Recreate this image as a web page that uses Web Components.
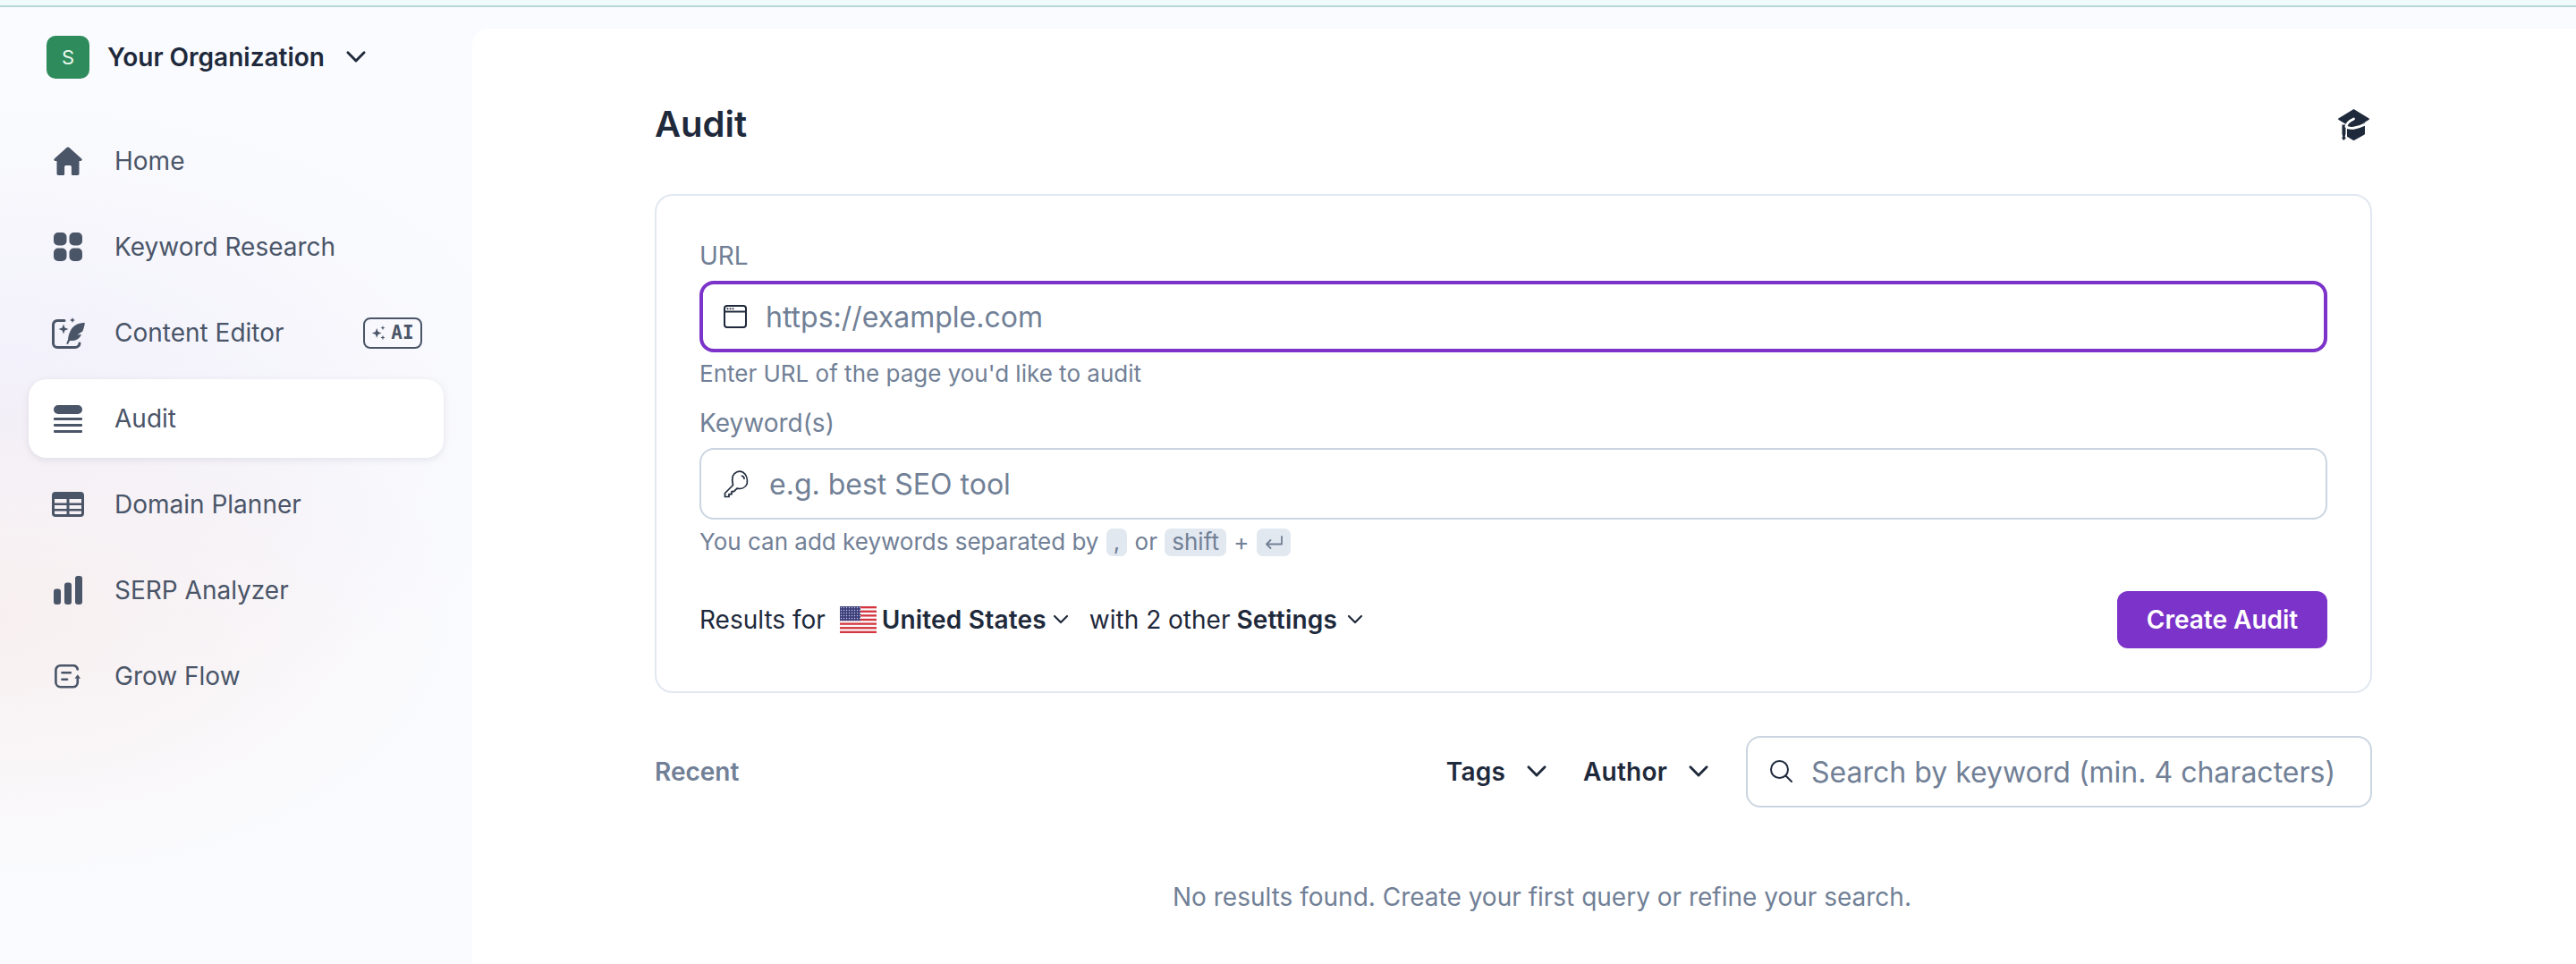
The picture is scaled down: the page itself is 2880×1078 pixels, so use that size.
<!DOCTYPE html>
<html lang="en"><head><meta charset="utf-8"><title>Audit</title>
<style>
html,body{margin:0;padding:0;height:100%;overflow:hidden}
body{font-family:Inter,"Liberation Sans",sans-serif;color:#1e293b}
</style></head><body>
<app-shell>
  <side-bar slot="side">
    <org-switch>Your Organization</org-switch>
    <nav-item icon="home">Home</nav-item>
    <nav-item icon="grid">Keyword Research</nav-item>
    <nav-item icon="quill" badge>Content Editor</nav-item>
    <nav-item icon="audit" active>Audit</nav-item>
    <nav-item icon="table">Domain Planner</nav-item>
    <nav-item icon="bars">SERP Analyzer</nav-item>
    <nav-item icon="flow">Grow Flow</nav-item>
  </side-bar>
  <audit-page slot="main"></audit-page>
</app-shell>
<script>
const ICONS={
home:'<path fill="currentColor" d="M16 .5c.5 0 1 .2 1.400.6l13.800 12.400c1 .9.4 2.500-.9 2.500H28.500v14.300c0 1-.8 1.700-1.700 1.700h-5.300c-.9 0-1.600-.7-1.600-1.600v-7.700c0-1-.8-1.700-1.700-1.700h-4.400c-.9 0-1.700.7-1.700 1.700v7.700c0 .9-.7 1.600-1.600 1.600H5.200c-.9 0-1.700-.7-1.700-1.700V16H1.700c-1.300 0-1.900-1.600-.9-2.500L14.600 1.100c.4-.4.9-.6 1.400-.6z"/>',
grid:'<g fill="currentColor"><rect x="0" y="0" width="14.500" height="14.500" rx="5"/><rect x="17.500" y="0" width="14.500" height="14.500" rx="5"/><rect x="0" y="17.500" width="14.500" height="14.500" rx="5"/><rect x="17.500" y="17.500" width="14.500" height="14.500" rx="5"/></g>',
quill:'<path fill="none" stroke="currentColor" stroke-width="3" stroke-linecap="round" stroke-linejoin="round" d="M14 3.500H6A4.500 4.500 0 0 0 1.500 8V29A4.500 4.500 0 0 0 6 33.500H26a5 5 0 0 0 5-4.500"/><g fill="currentColor"><path d="M13 7.500l1.500 4 4 1.500-4 1.500-1.500 4-1.500-4-4-1.500 4-1.500z"/><path d="M23 0l.9 2.100 2.100.9-2.100.9-.9 2.100-.9-2.100-2.100-.9 2.100-.9z"/><path d="M37 6c-7 0-12.500 2.400-15.500 7.500-2.200 3.800-3.300 8-3.500 11.500-.7 1.500-1.400 3-1.800 4.200l1.800.8c.6-1.400 1.300-2.800 2-4 5.500.5 10.700-1.500 13-7l-4.500.5 5.800-3.900c1.300-3 2.200-6.600 2.700-10.600z"/></g>',
audit:'<g fill="currentColor"><rect x="0" y="0" width="32" height="10" rx="5"/><rect x="0" y="14" width="32" height="3" rx="1"/><rect x="0" y="21" width="32" height="3" rx="1"/><rect x="0" y="28" width="32" height="3" rx="1"/></g>',
table:'<path fill="currentColor" fill-rule="evenodd" d="M4 0h28a4 4 0 0 1 4 4v20a4 4 0 0 1-4 4H4a4 4 0 0 1-4-4V4a4 4 0 0 1 4-4zM3 8v4.500h13.500V8zM19.500 8v4.500H33V8zM3 15v4h13.500v-4zM19.500 15v4H33v-4zM3 21.500V24a1 1 0 0 0 1 1h12.500v-3.500zM19.500 21.500V25H32a1 1 0 0 0 1-1v-2.500z"/>',
bars:'<g fill="currentColor"><rect x="0" y="14.500" width="8" height="17.500" rx="3"/><rect x="12" y="7.500" width="8" height="24.500" rx="3"/><rect x="24" y="0" width="8" height="32" rx="3"/></g>',
flow:'<g fill="none" stroke="currentColor" stroke-width="2.800" stroke-linecap="round" stroke-linejoin="round"><path d="M27.500 6A5.500 5.500 0 0 0 23 1.500H7A5.500 5.500 0 0 0 1.500 7V21.500A5.500 5.500 0 0 0 7 27H22.500a5.500 5.500 0 0 0 5-5.500v-4"/><path d="M9 10h10M9 18h6"/></g><path fill="currentColor" d="M27.500 12l3.500 5h-7z"/>',
chev:'<path fill="none" stroke="currentColor" stroke-width="2.200" stroke-linecap="round" stroke-linejoin="round" d="M3 6l7 7 7-7"/>',
browser:'<g fill="none" stroke="currentColor" stroke-width="2"><rect x="2" y="2" width="24" height="24" rx="3"/><path d="M2 8.500h24"/></g><g fill="currentColor"><circle cx="5.500" cy="5.300" r="1"/><circle cx="8.500" cy="5.300" r="1"/><circle cx="11.500" cy="5.300" r="1"/></g>',
key:'<g fill="none" stroke="currentColor" stroke-width="1.700" stroke-linecap="round" stroke-linejoin="round"><path d="M11.500 17.500 2.500 26.500v4h4.500v-2.800h3v-3h2.500l3.500-3.500c5 1 9.500-1 11.200-5.200C28 11 26.500 5.500 22.500 3 18 .7 13 3 11.200 7.500c-.8 2.800-.7 6 .3 10z"/><path d="M21.500 7.200c1.500.4 2.500 1.600 2.500 3"/></g>',
search:'<g fill="none" stroke="currentColor" stroke-width="2" stroke-linecap="round"><circle cx="11.500" cy="11.500" r="9.500"/><path d="M18.500 18.500 25 25"/></g>',
cap:'<g fill="currentColor"><path d="M17.500 0 34.300 10.200c.9.500.9 1.300 0 1.800L17.500 22.300.7 12c-.9-.5-.9-1.300 0-1.800z"/><path d="M10 17.500l7.500 4.600L30 15v12c0 1-.5 1.600-1.300 2.100L18.300 34.700c-.5.300-1.100.3-1.600 0L10 30.700z"/><path d="M4.500 17.500h4v10l-.8 3.300 1 2-2.700 2.200-1.800-2.800 1-1.500-.7-3z"/></g><path fill="none" stroke="#fff" stroke-width="2.800" stroke-linecap="round" d="M17.500 11C13 13 9.500 16 9 19.500c3 3.500 12 2 21.500-2.500"/>',
enter:'<path fill="none" stroke="currentColor" stroke-width="1.800" stroke-linecap="round" stroke-linejoin="round" d="M20 2v8.500H3M7.500 6 3 10.500 7.500 15"/>',
spark:'<g fill="currentColor"><path d="M7 4.500l1.600 4.400L13 10.500l-4.400 1.600L7 16.500l-1.600-4.400L1 10.500l4.400-1.600z"/><path d="M14.500 1l.8 2.200 2.200.8-2.200.8-.8 2.200-.8-2.200-2.200-.8 2.200-.8z"/><path d="M14.500 13.200l.8 2.200 2.200.8-2.200.8-.8 2.200-.8-2.200-2.200-.8 2.200-.8z"/></g>'
};
const VB={home:'0 0 32 33',grid:'0 0 32 32',quill:'0 0 37 35',audit:'0 0 32 31',table:'0 0 36 28',bars:'0 0 32 32',flow:'0 0 32 28',chev:'0 0 20 20',browser:'0 0 28 28',key:'0 0 32 32',search:'0 0 28 28',cap:'0 0 35 35',enter:'0 0 22 16',spark:'0 0 19 20'};
function icon(n,w,h,style=''){return `<svg xmlns="http://www.w3.org/2000/svg" width="${w}" height="${h||w}" viewBox="${VB[n]}" style="display:block;flex:none;${style}" aria-hidden="true">${ICONS[n]}</svg>`}
class Base extends HTMLElement{
  constructor(){super();this.attachShadow({mode:'open'});}
  connectedCallback(){this.shadowRoot.innerHTML=this.render();}
}
customElements.define('app-shell',class extends Base{render(){return `<style>
:host{display:flex;flex-direction:column;height:1078px;width:2880px;overflow:hidden;
background:
 radial-gradient(520px 300px at 0 690px,#f8f0f0 0,rgba(248,240,240,0) 100%),
 radial-gradient(620px 360px at 0 470px,#f1effa 0,rgba(241,239,250,0) 100%),
 #fafbfe}
.top{height:6px;background:#effbfb;border-bottom:2px solid #b9d6d6;flex:none}
.body{flex:1;display:flex;min-height:0;padding-top:24px}
.side{width:528px;flex:none}
.main{flex:1;min-width:0;background:#fff;border-top-left-radius:18px}
</style><div class="top"></div><div class="body"><div class="side"><slot name="side"></slot></div><div class="main"><slot name="main"></slot></div></div>`}});
customElements.define('side-bar',class extends Base{render(){return `<style>
:host{display:flex;flex-direction:column;gap:8px;padding:8px 32px 0}
</style><slot></slot>`}});
customElements.define('org-switch',class extends Base{render(){return `<style>
:host{display:flex;align-items:center;height:48px;padding-left:20px;margin-bottom:40px;font-size:28px;font-weight:600;color:#1e293b}
.a{width:48px;height:48px;border-radius:10px;background:#2e8b5b;color:#e9f8ef;font-size:22px;font-weight:400;display:flex;align-items:center;justify-content:center;flex:none;margin-right:20px}
.c{margin-left:22px;color:#1e293b}
</style><span class="a">S</span><slot></slot><span class="c">${icon('chev',26)}</span>`}});
customElements.define('nav-item',class extends Base{render(){const a=this.hasAttribute('active'),b=this.hasAttribute('badge'),n=this.getAttribute('icon');
const sz={home:[32,33],grid:[32,32],quill:[37,35],audit:[32,31],table:[36,28],bars:[32,32],flow:[30,28]}[n];
return `<style>
:host{display:flex;align-items:center;height:88px;padding:0 24px 0 21px;border-radius:20px;font-size:28px;font-weight:400;color:#4a5568;position:relative;${a?'background:#fff;box-shadow:0 2px 8px rgba(15,23,42,.09);':''}}
.i{width:46px;display:flex;justify-content:center;margin-right:29px;flex:none;color:#4a5568}
.b{margin-left:auto;display:flex;align-items:center;justify-content:center;gap:5px;box-sizing:border-box;width:66px;height:35px;border:2px solid #4a5568;border-radius:8px;font-size:21px;font-weight:700;font-family:"DejaVu Sans Mono","Liberation Mono",monospace;color:#4a5568}
</style><span class="i">${icon(n,sz[0],sz[1])}</span><slot></slot>${b?`<span class="b">${icon('spark',17,18)}<span>AI</span></span>`:''}`}});
customElements.define('text-field',class extends Base{render(){const f=this.hasAttribute('focused'),n=this.getAttribute('icon');
return `<style>
:host{display:flex;align-items:center;height:80px;box-sizing:border-box;border:${f?'4px solid #7b33c9':'2px solid #cbd5e1'};border-radius:16px;background:#fff;padding-left:${this.getAttribute('pad')||26}px;font-size:32px;gap:${this.getAttribute('gap')||20}px;color:#718096}
span{color:#1e293b;display:block}
</style><span>${icon(n,+(this.getAttribute('size')||28))}</span><slot></slot>`}});
customElements.define('key-cap',class extends Base{render(){return `<style>
:host{display:inline-flex;align-items:center;justify-content:center;height:31px;padding:0 8px;margin:0 1px;background:#e2e8f0;border-radius:7px;color:#718096}
</style><slot></slot>`}});
customElements.define('drop-down',class extends Base{render(){const s=+(this.getAttribute('size')||20),g=this.getAttribute('gap')||8;return `<style>
:host{display:inline-flex;align-items:center;gap:${g}px;font-weight:600;font-size:28px;color:#1e293b;letter-spacing:.2px}
</style><slot></slot>${icon('chev',s)}`}});
customElements.define('us-flag',class extends Base{render(){let stripes='';for(let i=0;i<7;i++)stripes+=`<rect y="${i*2*30/13}" width="41" height="${30/13}" fill="#d4353f"/>`;
return `<style>:host{display:block;flex:none;width:41px;height:30px}</style><svg xmlns="http://www.w3.org/2000/svg" width="41" height="30" viewBox="0 0 41 30" style="display:block"><defs><pattern id="st" width="3" height="3" patternUnits="userSpaceOnUse"><rect width="3" height="3" fill="#3c3f7a"/><circle cx="1.500" cy="1.500" r=".7" fill="#c9cbe6"/></pattern></defs><rect width="41" height="30" fill="#fafafa"/>${stripes}<rect width="23" height="16.200" fill="url(#st)"/></svg>`}});
customElements.define('audit-page',class extends Base{render(){return `<style>
:host{display:block;padding:0 228px 0 204px;color:#1e293b}
.head{display:flex;align-items:center;justify-content:space-between;height:80px;margin-top:66px}
h1{margin:0;font-size:40px;font-weight:600;color:#1e293b}
.card{box-sizing:border-box;height:558px;margin-top:39px;border:2px solid #e2e8f0;border-radius:20px;padding:50px 48px 0;display:flex;flex-direction:column}
label{display:block;font-size:28px;line-height:34px;color:#718096;margin-bottom:11px}
.hint{font-size:26px;line-height:32px;color:#718096;margin-top:8px;display:flex;align-items:center;white-space:pre}
.k2{margin-top:22px}
.hint2{margin-top:9px}
.row{display:flex;align-items:center;margin-top:39px;height:64px;font-size:28px;white-space:pre}
.btn{margin-left:auto;height:64px;width:235px;box-sizing:border-box;display:flex;align-items:center;justify-content:center;background:#7b33c9;color:#fff;border-radius:12px;font-weight:600;font-size:28px}
.recent{display:flex;align-items:center;height:80px;margin-top:48px}
.recent b{font-weight:600;font-size:28px;color:#718096;margin-right:auto}
.search{width:700px;flex:none}
.none{text-align:center;margin-top:82px;padding-left:64px;font-size:28px;line-height:36px;color:#718096}
</style>
<div class="head"><h1>Audit</h1>${icon('cap',35,35,'margin:3px 3px 0 0;color:#1e293b')}</div>
<div class="card">
<label>URL</label>
<text-field focused icon="browser" size="28" pad="22">https://example.com</text-field>
<div class="hint">Enter URL of the page you'd like to audit</div>
<label class="k2">Keyword(s)</label>
<text-field icon="key" size="32" pad="24" gap="20">e.g. best SEO tool</text-field>
<div class="hint hint2">You can add keywords separated by <key-cap>,</key-cap> or <key-cap>shift</key-cap> + <key-cap>${icon('enter',22,16)}</key-cap></div>
<div class="row">Results for  <us-flag></us-flag><span style="width:6px"></span><drop-down size="20" gap="6">United States</drop-down><span style="width:22px"></span>with 2 other<span style="width:7px"></span><drop-down size="20" gap="10">Settings</drop-down><div class="btn">Create Audit</div></div>
</div>
<div class="recent"><b>Recent</b><drop-down size="26" gap="22">Tags</drop-down><span style="width:39px"></span><drop-down size="26" gap="22">Author</drop-down><span style="width:40px"></span><text-field class="search" icon="search" size="28" pad="24" gap="19">Search by keyword (min. 4 characters)</text-field></div>
<div class="none">No results found. Create your first query or refine your search.</div>`}});
</script>
</body></html>
